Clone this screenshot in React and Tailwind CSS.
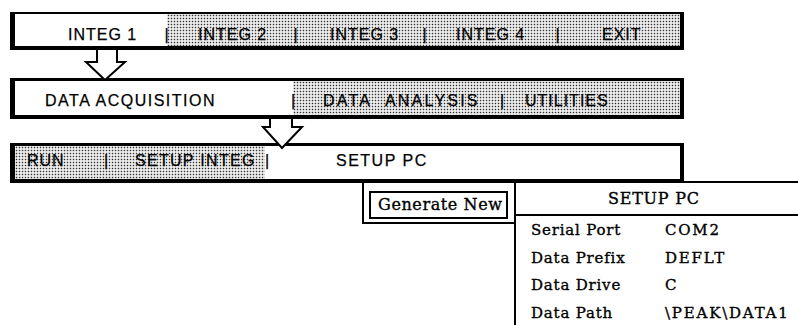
const pattern =
  "bg-[#ececec] bg-[radial-gradient(#333_0.6px,transparent_1.1px)] bg-[length:3px_3px]";

const Sep = ({ className = "" }) => (
  <span className={`w-[10px] text-center ${className}`}>|</span>
);

const Arrow = ({ className, points, w, h }) => (
  <svg className={`relative z-10 block ${className}`} width={w} height={h} viewBox={`0 0 ${w} ${h}`}>
    <polyline points={points} fill="#fff" stroke="#000" strokeWidth="2" strokeLinejoin="miter" />
  </svg>
);

const rows = [
  ["Serial Port", "COM2"],
  ["Data Prefix", "DEFLT"],
  ["Data Drive", "C"],
  ["Data Path", "\\PEAK\\DATA1"],
];

export default function App() {
  return (
    <div className="h-[325px] w-[798px] overflow-hidden bg-white pl-[10px] pt-[12px] text-black">
      <div className="font-['Liberation_Sans',Arial,sans-serif] text-[16px] leading-[18px] whitespace-nowrap [-webkit-text-stroke:0.25px_#000]">
        {/* Level 1 menu */}
        <div className="flex h-[38px] w-[674px] border-t-2 border-b-[4px] border-l-[5px] border-r-[4px] border-black tracking-[1px]">
          <div className="w-[152px] bg-white pl-[53px] pt-[12px]">INTEG 1</div>
          <div className={`flex flex-1 pt-[12px] ${pattern}`}>
            <Sep className="-ml-[5px]" />
            <span className="ml-[26px] w-[93px]">INTEG 2</span>
            <Sep />
            <span className="ml-[29px] w-[90px]">INTEG 3</span>
            <Sep />
            <span className="ml-[26px] w-[97px]">INTEG 4</span>
            <Sep />
            <span className="ml-[39px]">EXIT</span>
          </div>
        </div>

        <Arrow className="ml-[74px] -mb-[3px]" w={44} h={31} points="13,0 13,12 2,12 21,30 41,12 33,12 33,0" />

        {/* Level 2 menu */}
        <div className="flex h-[41px] w-[674px] border-t-[3px] border-b-[4px] border-l-[5px] border-r-[4px] border-black">
          <div className="w-[278px] bg-white pl-[30px] pt-[11px] tracking-[1.5px]">DATA ACQUISITION</div>
          <div className={`flex flex-1 pt-[11px] ${pattern}`}>
            <Sep className="-ml-[5px]" />
            <span className="ml-[25px] w-[174px] tracking-[2.2px] [word-spacing:8px]">DATA ANALYSIS</span>
            <Sep />
            <span className="ml-[18px] tracking-[1px]">UTILITIES</span>
          </div>
        </div>

        <Arrow className="ml-[250px] -mb-[7px]" w={45} h={31} points="10,0 10,8 3,8 22,29 42,8 32,8 32,0" />

        {/* Level 3 menu */}
        <div className="flex h-[40px] w-[674px] border-t-[3px] border-b-[4px] border-l-[5px] border-r-[4px] border-black">
          <div className={`flex w-[250px] pt-[6px] ${pattern}`}>
            <span className="ml-[12px] w-[74px] tracking-[1px]">RUN</span>
            <Sep />
            <span className="ml-[24px] tracking-[1.3px]">SETUP INTEG</span>
          </div>
          <div className="flex flex-1 bg-white pt-[6px]">
            <Sep className="-ml-[3px]" />
            <span className="ml-[64px] tracking-[1.5px]">SETUP PC</span>
          </div>
        </div>
      </div>

      {/* Setup PC area */}
      <div className="relative -mt-[2px] flex font-['DejaVu_Serif',serif] whitespace-nowrap [-webkit-text-stroke:0.35px_#000]">
        <div className="ml-[352px] h-[43px] w-[152px] shrink-0 border-b-2 border-l-2 border-black pl-[5px] pt-[10px]">
          <div className="h-[28px] w-[139px] border-2 border-black pl-[7px] text-[16px] leading-[24px] tracking-[0.6px]">
            Generate New
          </div>
        </div>
        <div className="h-[160px] w-[320px] shrink-0 border-l-2 border-t-2 border-black bg-white">
          <div className="border-b-2 border-black pl-[92px] text-[16px] leading-[31px] tracking-[0.75px]">SETUP PC</div>
          <div className="grid grid-cols-[134px_1fr] pl-[15px] pt-[1px] text-[15px] leading-[27.5px]">
            {rows.map(([label, value]) => (
              <div key={label} className="contents">
                <span className="tracking-[0.8px]">{label}</span>
                <span className="tracking-[1.8px]">{value}</span>
              </div>
            ))}
          </div>
        </div>
      </div>
    </div>
  );
}
